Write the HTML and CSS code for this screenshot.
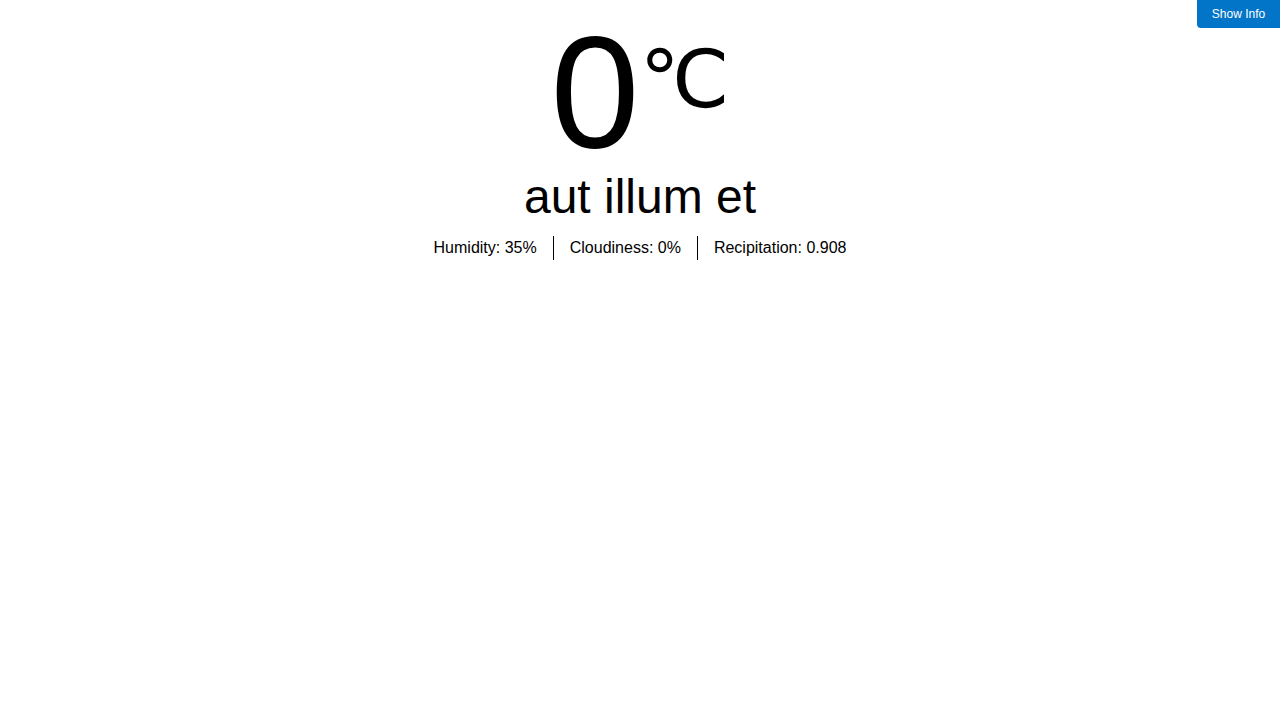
FILE: index.html
```html
<!DOCTYPE html>
<html>
<head>
<meta charset="utf-8">
<link rel="stylesheet" href="styles.css">
</head>
<body>
<button class="info-btn">Show Info</button>
<main class="weather">
  <div class="temp">0<sup class="unit">℃</sup></div>
  <div class="desc">aut illum et</div>
  <div class="stats">
    <span class="stat">Humidity: 35%</span>
    <span class="stat">Cloudiness: 0%</span>
    <span class="stat">Recipitation: 0.908</span>
  </div>
</main>
</body>
</html>
```
FILE: styles.css
```css
html, body {
  margin: 0;
  padding: 0;
  background: #fff;
  color: #000;
  font-family: "Liberation Sans", Arial, sans-serif;
}
.info-btn {
  position: absolute;
  top: 0;
  right: 0;
  width: 83px;
  height: 28px;
  border: none;
  border-bottom-left-radius: 4px;
  background: #0275c8;
  color: #fff;
  font-family: "Liberation Sans", Arial, sans-serif;
  font-size: 12px;
  padding: 0;
}
.weather {
  display: flex;
  flex-direction: column;
  align-items: center;
  padding-top: 0;
}
.temp {
  font-size: 160px;
  line-height: 184px;
  margin-top: 0;
}
.unit {
  font-size: 80px;
  font-family: "DejaVu Sans", sans-serif;
  vertical-align: 40px;
  line-height: 0;
}
.desc {
  font-size: 48px;
  line-height: 56px;
  margin-top: -15px;
}
.stats {
  display: flex;
  margin-top: 11px;
  font-size: 16px;
}
.stat {
  padding: 0 16px;
  line-height: 24px;
}
.stat + .stat {
  border-left: 1px solid #000;
}
```
